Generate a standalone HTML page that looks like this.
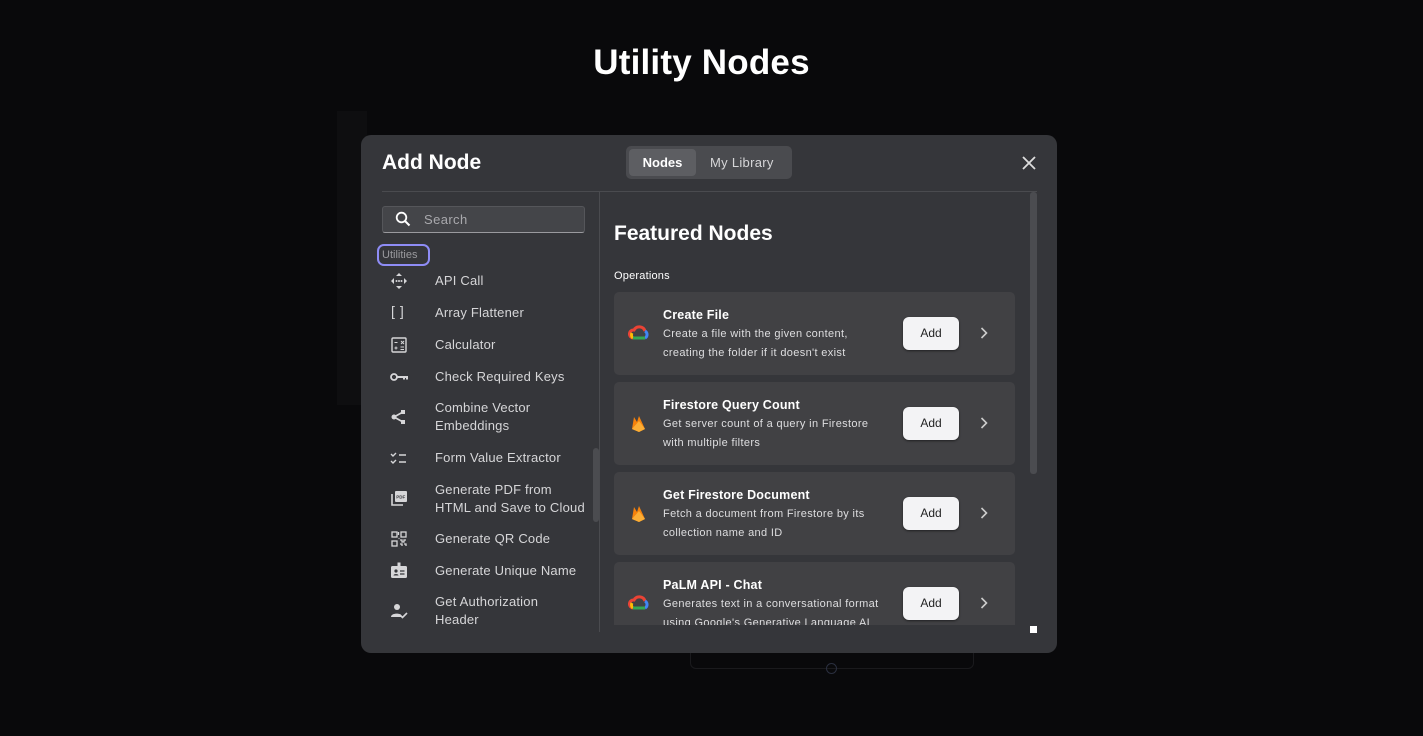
<!DOCTYPE html>
<html><head><meta charset="utf-8"><style>
*{margin:0;padding:0;box-sizing:border-box}
body{width:1423px;height:736px;background:#09090b;font-family:"Liberation Sans",sans-serif;position:relative;overflow:hidden;color:#e8e8ea}
.abs{position:absolute}
h1{position:absolute;top:43px;left:-10px;width:1423px;text-align:center;font-size:35px;font-weight:bold;color:#fff;letter-spacing:0.2px}
.modal{left:361px;top:135px;width:696px;height:518px;background:#35363a;border-radius:10px}
.item{position:absolute;left:74px;font-size:13px;color:#d6d6d8;line-height:17.5px;letter-spacing:0.2px}
.ic{position:absolute;left:28px;width:20px;height:20px}
.card{position:absolute;left:253px;width:401px;height:83px;background:#414144;border-radius:5px}
.card .t{position:absolute;left:49px;top:16px;font-size:12.5px;font-weight:bold;color:#fff;letter-spacing:0.2px}
.card .d{position:absolute;left:49px;top:33px;font-size:11px;color:#dedee0;line-height:18.5px;width:240px;letter-spacing:0.35px;white-space:nowrap}
.card .b{position:absolute;left:289px;top:25px;width:56px;height:33px;background:#f3f3f5;border-radius:6px;color:#222;font-size:12px;text-align:center;line-height:33px;box-shadow:0 1px 2px rgba(0,0,0,.5)}
.card .ch{position:absolute;left:366px;top:35px}
.card .lg{position:absolute;left:14px;top:32px}
</style></head><body>
<div class="abs" style="left:337px;top:111px;width:30px;height:294px;background:#0e0e10"></div>
<div class="abs" style="left:690px;top:640px;width:284px;height:29px;border:1px solid #1a1a1d;border-radius:6px"></div>
<div class="abs" style="left:826px;top:663px;width:11px;height:11px;border:1px solid #2a2f3f;border-radius:50%"></div>
<h1>Utility Nodes</h1>
<div class="abs modal">
  <div class="abs" style="left:21px;top:16px;font-size:21px;font-weight:bold;color:#fff">Add Node</div>
  <div class="abs" style="left:265px;top:11px;width:166px;height:33px;background:#4a4b4f;border-radius:5px"></div>
  <div class="abs" style="left:268px;top:14px;width:67px;height:27px;background:#5d5e62;border-radius:4px;font-size:13px;font-weight:bold;color:#fff;text-align:center;line-height:27px">Nodes</div>
  <div class="abs" style="left:349px;top:14px;font-size:13px;color:#d6d6d8;line-height:27px;letter-spacing:0.3px">My Library</div>
  <svg class="abs" style="left:661px;top:21px" width="14" height="14" viewBox="0 0 14 14"><path d="M1 1L13 13M13 1L1 13" stroke="#ddd" stroke-width="1.8"/></svg>
  <div class="abs" style="left:21px;top:56px;width:655px;height:1px;background:#4a4b4f"></div>
  <div class="abs" style="left:238px;top:56px;width:1px;height:441px;background:#4a4b4f"></div>
  <div class="abs" style="left:21px;top:71px;width:203px;height:27px;background:#444549;border:1px solid #55565a;border-bottom:1px solid #9a9a9e;border-radius:3px"></div>
  <svg class="abs" style="left:34px;top:76px" width="16" height="16" viewBox="0 0 16 16"><circle cx="6.5" cy="6.5" r="4.8" stroke="#fff" stroke-width="1.8" fill="none"/><path d="M10 10L14.5 14.5" stroke="#fff" stroke-width="2"/></svg>
  <div class="abs" style="left:63px;top:77px;font-size:13px;color:#a9a9ad;letter-spacing:0.4px">Search</div>
  <div class="abs" style="left:16px;top:109px;width:53px;height:22px;border:2.5px solid #8e8cf5;border-radius:7px;font-size:11px;color:#9a9a9e;line-height:19px;padding-left:3px">Utilities</div>
  <div class="item" style="top:137px">API Call</div>
  <svg class="ic" style="top:136px" viewBox="0 0 20 20" fill="#d6d6d8"><path d="M10 2l3 3h-6zM10 18l3-3h-6zM2 10l3-3v6zM18 10l-3-3v6z"/><circle cx="7.5" cy="10" r="1"/><circle cx="10" cy="10" r="1"/><circle cx="12.5" cy="10" r="1"/></svg>
  <div class="item" style="top:169px">Array Flattener</div>
  <div class="abs" style="left:30px;top:168px;font-size:14px;color:#d6d6d8;letter-spacing:5px">[]</div>
  <div class="item" style="top:201px">Calculator</div>
  <svg class="ic" style="top:200px" viewBox="0 0 20 20"><rect x="3" y="3" width="14" height="14" rx="1" stroke="#d6d6d8" stroke-width="1.4" fill="none"/><path d="M5.5 7.5h3M12 6l3 3M15 6l-3 3M5.5 13h3M7 11.5v3M11.5 12h3.5M11.5 14.5h3.5" stroke="#d6d6d8" stroke-width="1"/></svg>
  <div class="item" style="top:233px">Check Required Keys</div>
  <svg class="ic" style="top:232px" viewBox="0 0 20 20"><circle cx="5" cy="10" r="3" stroke="#d6d6d8" stroke-width="1.8" fill="none"/><path d="M8 10h10v2.5M15 10v2.5" stroke="#d6d6d8" stroke-width="2" fill="none"/></svg>
  <div class="item" style="top:264px">Combine Vector<br>Embeddings</div>
  <svg class="ic" style="top:272px" viewBox="0 0 20 20" fill="#d6d6d8"><circle cx="5" cy="10" r="2.5"/><rect x="12" y="3" width="4" height="4"/><rect x="12" y="13" width="4" height="4"/><path d="M5 10L14 5M5 10L14 15" stroke="#d6d6d8" stroke-width="1.6"/></svg>
  <div class="item" style="top:314px">Form Value Extractor</div>
  <svg class="ic" style="top:313px" viewBox="0 0 20 20"><path d="M2 6l2 2 3-3M2 13l2 2 3-3M10 7h7M10 14h7" stroke="#d6d6d8" stroke-width="1.4" fill="none"/></svg>
  <div class="item" style="top:346px">Generate PDF from<br>HTML and Save to Cloud</div>
  <svg class="ic" style="top:353px" viewBox="0 0 20 20"><path d="M3 6v11h11" stroke="#d6d6d8" stroke-width="1.6" fill="none"/><rect x="6" y="3" width="12" height="11" rx="1" fill="#d6d6d8"/><text x="7.2" y="10.5" font-size="4.5" font-family="Liberation Sans" font-weight="bold" fill="#35363a">PDF</text></svg>
  <div class="item" style="top:395px">Generate QR Code</div>
  <svg class="ic" style="top:394px" viewBox="0 0 20 20" fill="none" stroke="#d6d6d8" stroke-width="1.3"><rect x="3" y="3" width="5" height="5"/><rect x="12" y="3" width="5" height="5"/><rect x="3" y="12" width="5" height="5"/><path d="M11 11h2v2h2v-2h2M11 15h2v2M15 15h2v2M9.5 3v3M9.5 9.5h1"/></svg>
  <div class="item" style="top:427px">Generate Unique Name</div>
  <svg class="ic" style="top:425px" viewBox="0 0 20 20"><rect x="2" y="6" width="16" height="12" rx="1.5" fill="#d6d6d8"/><rect x="8.5" y="2.5" width="3" height="5" fill="#d6d6d8"/><circle cx="7" cy="11" r="1.6" fill="#35363a"/><path d="M4.5 15.5c0-2 5-2 5 0z" fill="#35363a"/><path d="M11 11h4.5M11 14h4.5" stroke="#35363a" stroke-width="1.2"/></svg>
  <div class="item" style="top:458px">Get Authorization<br>Header</div>
  <svg class="ic" style="top:466px" viewBox="0 0 20 20" fill="#d6d6d8"><circle cx="8" cy="6" r="3"/><path d="M2 16c0-4 9-4 10-2v2z"/><path d="M11 14l2.5 2.5 4.5-4.5" stroke="#d6d6d8" stroke-width="1.6" fill="none"/></svg>
  <div class="abs" style="left:232px;top:313px;width:6px;height:74px;background:#4b4c50;border-radius:3px"></div>
  <div class="abs" style="left:253px;top:87px;font-size:21px;font-weight:bold;color:#fff">Featured Nodes</div>
  <div class="abs" style="left:253px;top:135px;font-size:11px;color:#fff;letter-spacing:0.2px">Operations</div>
  <div class="abs" style="left:0;top:0;width:696px;height:490px;overflow:hidden">
  <div class="card" style="top:157px"><svg class="lg" width="22" height="18" viewBox="0 0 22 18"><path d="M5 14a4 4 0 0 1 1-8 6 6 0 0 1 11 1" stroke="#ea4335" stroke-width="3" fill="none"/><path d="M5 14a4 4 0 0 1-1-5" stroke="#fbbc05" stroke-width="3" fill="none"/><path d="M17 7a4 4 0 0 1 0 7" stroke="#4285f4" stroke-width="3" fill="none"/><path d="M5 14h12" stroke="#34a853" stroke-width="3"/></svg><div class="t">Create File</div><div class="d">Create a file with the given content,<br>creating the folder if it doesn't exist</div><div class="b">Add</div><svg class="ch" width="8" height="12" viewBox="0 0 8 12"><path d="M1.5 1l5 5-5 5" stroke="#ccc" stroke-width="1.6" fill="none"/></svg></div>
  <div class="card" style="top:247px"><svg class="lg" width="22" height="20" viewBox="0 0 22 20"><path d="M4 15L6 3l3 5 2-6 6 13-6 3z" fill="#f6820c"/><path d="M4 15l7-8 6 8-6 3z" fill="#fcae35"/></svg><div class="t">Firestore Query Count</div><div class="d">Get server count of a query in Firestore<br>with multiple filters</div><div class="b">Add</div><svg class="ch" width="8" height="12" viewBox="0 0 8 12"><path d="M1.5 1l5 5-5 5" stroke="#ccc" stroke-width="1.6" fill="none"/></svg></div>
  <div class="card" style="top:337px"><svg class="lg" width="22" height="20" viewBox="0 0 22 20"><path d="M4 15L6 3l3 5 2-6 6 13-6 3z" fill="#f6820c"/><path d="M4 15l7-8 6 8-6 3z" fill="#fcae35"/></svg><div class="t">Get Firestore Document</div><div class="d">Fetch a document from Firestore by its<br>collection name and ID</div><div class="b">Add</div><svg class="ch" width="8" height="12" viewBox="0 0 8 12"><path d="M1.5 1l5 5-5 5" stroke="#ccc" stroke-width="1.6" fill="none"/></svg></div>
  <div class="card" style="top:427px"><svg class="lg" width="22" height="18" viewBox="0 0 22 18"><path d="M5 14a4 4 0 0 1 1-8 6 6 0 0 1 11 1" stroke="#ea4335" stroke-width="3" fill="none"/><path d="M5 14a4 4 0 0 1-1-5" stroke="#fbbc05" stroke-width="3" fill="none"/><path d="M17 7a4 4 0 0 1 0 7" stroke="#4285f4" stroke-width="3" fill="none"/><path d="M5 14h12" stroke="#34a853" stroke-width="3"/></svg><div class="t">PaLM API - Chat</div><div class="d">Generates text in a conversational format<br>using Google's Generative Language AI</div><div class="b">Add</div><svg class="ch" width="8" height="12" viewBox="0 0 8 12"><path d="M1.5 1l5 5-5 5" stroke="#ccc" stroke-width="1.6" fill="none"/></svg></div>
  </div>
  <div class="abs" style="left:669px;top:57px;width:7px;height:282px;background:#4b4c50;border-radius:3px"></div>
  <div class="abs" style="left:669px;top:491px;width:7px;height:7px;background:#fff"></div>
</div>
</body></html>
